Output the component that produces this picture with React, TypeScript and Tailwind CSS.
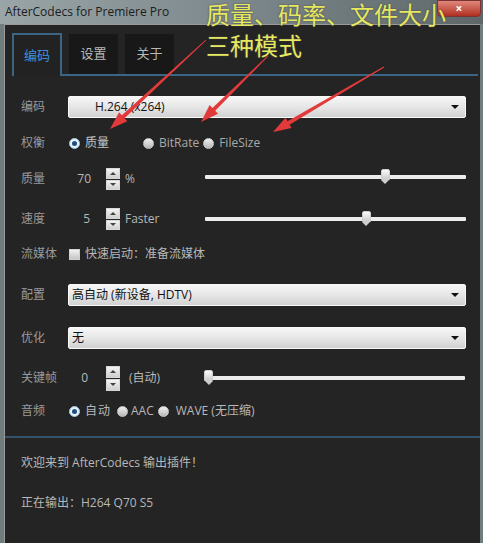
import type { ReactNode } from "react";

const CJK = "font-['Open_Sans','Noto_Sans_CJK_SC',sans-serif]";

/** Small row label on the left of the panel. */
const Label = ({ children }: { children: ReactNode }) => (
  <div className="w-[47px] shrink-0 text-[12px] text-[#9a9a9a]">{children}</div>
);

/** Light grey combo box with a black arrow. */
const Select = ({ value, pad = "pl-[26px]" }: { value: string; pad?: string }) => (
  <div
    className={`flex h-[22px] w-[398px] items-center justify-between rounded-[2px] border border-[#f8f8f8] bg-gradient-to-b from-[#f6f6f6] via-[#e6e6e6] to-[#d2d2d2] ${pad} pr-[6px] text-[12px] text-[#111]`}
  >
    <span>{value}</span>
    <span className="h-0 w-0 border-x-[4px] border-t-[4px] border-x-transparent border-t-[#111]" />
  </div>
);

const Radio = ({ on = false }: { on?: boolean }) => (
  <span
    className={`flex h-[11px] w-[11px] items-center justify-center rounded-full border ${
      on ? "border-[#9fc4e0] bg-[#e8f2fa]" : "border-[#c8c8c8] bg-gradient-to-b from-[#f0f0f0] to-[#b8b8b8]"
    }`}
  >
    {on && <span className="h-[5px] w-[5px] rounded-full bg-[#1d4f7c]" />}
  </span>
);

/** Up / down spin buttons. */
const Spinner = ({ tall = false }: { tall?: boolean }) => (
  <div className={`flex w-[14px] flex-col gap-[1px] ${tall ? "h-[25px]" : "h-[22px]"}`}>
    {[0, 1].map((i) => (
      <div
        key={i}
        className="flex flex-1 items-center justify-center border border-[#d8d8d8] bg-gradient-to-b from-[#f4f4f4] to-[#cfcfcf]"
      >
        <span
          className={`h-0 w-0 border-x-[3px] border-x-transparent ${
            i === 0 ? "border-b-[3px] border-b-[#444]" : "border-t-[3px] border-t-[#444]"
          }`}
        />
      </div>
    ))}
  </div>
);

/** Horizontal track with a pointed thumb; pos is px from track start. */
const Slider = ({ pos, width = 261 }: { pos: number; width?: number }) => (
  <div className="relative h-[16px]" style={{ width }}>
    <div className="absolute left-0 right-0 top-[6px] h-[4px] rounded-[1px] bg-[#ececec]" />
    <div className="absolute top-0 flex flex-col items-center" style={{ left: pos - 4 }}>
      <div className="h-[11px] w-[9px] rounded-t-[2px] border border-[#cfcfcf] bg-gradient-to-b from-[#fafafa] to-[#cdcdcd]" />
      <div className="h-0 w-0 border-x-[4px] border-t-[4px] border-x-transparent border-t-[#cdcdcd]" />
    </div>
  </div>
);

const Tab = ({ label, active = false }: { label: string; active?: boolean }) =>
  active ? (
    <div className="-mb-[2px] flex h-[43px] w-[50px] items-center justify-center border-x-2 border-t-2 border-[#3b6584] bg-[#222] text-[13px] text-[#3d8fe0]">
      {label}
    </div>
  ) : (
    <div className="flex h-[40px] w-[49px] items-center justify-center bg-[#181818] text-[13px] text-[#b8b8b8]">
      {label}
    </div>
  );

/** Tapered red annotation arrow drawn from (x1,y1) to the head at (x2,y2). */
const Arrow = ({ x1, y1, x2, y2 }: { x1: number; y1: number; x2: number; y2: number }) => {
  const dx = x2 - x1;
  const dy = y2 - y1;
  const len = Math.hypot(dx, dy);
  const ux = dx / len;
  const uy = dy / len;
  const nx = -uy;
  const ny = ux;
  const headLen = 18;
  const bx = x2 - ux * headLen;
  const by = y2 - uy * headLen;
  const pts = [
    [x1 + nx * 0.5, y1 + ny * 0.5],
    [bx + nx * 2, by + ny * 2],
    [bx + nx * 6, by + ny * 6],
    [x2, y2],
    [bx - nx * 6, by - ny * 6],
    [bx - nx * 2, by - ny * 2],
    [x1 - nx * 0.5, y1 - ny * 0.5],
  ]
    .map((p) => p.join(","))
    .join(" ");
  return <polygon points={pts} fill="#e23a3a" />;
};

export default function App() {
  return (
    <div className={`relative h-[543px] w-[483px] overflow-hidden bg-[#6f7d7d] ${CJK}`}>
      {/* title bar */}
      <div className="flex h-[24px] items-start bg-gradient-to-r from-[#9aa5a8] via-[#7b878a] to-[#5e686b] pl-[5px] pt-[3px]">
        <span className="text-[12px] text-[#1c1c1c] font-['Open_Sans',sans-serif]">
          AfterCodecs for Premiere Pro
        </span>
        <div className="ml-auto mr-[2px] -mt-[3px] flex h-[17px] w-[44px] items-center justify-center rounded-b-[4px] border border-[#7a3434] bg-gradient-to-b from-[#e0877a] to-[#b02c20] text-[12px] font-bold text-white">
          ×
        </div>
      </div>

      {/* window body */}
      <div className="ml-[4px] mr-[3px] h-[519px] border-l border-t border-[#9a9a9a] bg-[#242424]">
        <div className="pl-[7px] pt-[8px] pr-[2px]">
          <div className="flex items-end gap-[7px]">
            <Tab label="编码" active />
            <Tab label="设置" />
            <Tab label="关于" />
          </div>
          <div className="h-[2px] bg-[#3b6584]" />
        </div>

        <div className="pl-[16px] pt-[20px]">
          <div className="flex h-[22px] items-center">
            <Label>编码</Label>
            <Select value="H.264 (x264)" />
          </div>

          <div className="mt-[15px] flex h-[20px] items-center text-[12px] text-[#c4c4c4]">
            <Label>权衡</Label>
            <span className="ml-[1px]"><Radio on /></span>
            <span className="ml-[5px]">质量</span>
            <span className="ml-[34px]"><Radio /></span>
            <span className="ml-[5px] text-[#aaa]">BitRate</span>
            <span className="ml-[4px]"><Radio /></span>
            <span className="ml-[5px] text-[#aaa]">FileSize</span>
          </div>

          <div className="mt-[15px] flex h-[22px] items-center text-[12px] text-[#b8b8b8]">
            <Label>质量</Label>
            <span className="w-[23px] text-right">70</span>
            <span className="ml-[15px]"><Spinner /></span>
            <span className="ml-[5px]">%</span>
            <span className="ml-[70px] -mt-[4px]"><Slider pos={180} /></span>
          </div>

          <div className="mt-[18px] flex h-[22px] items-center text-[12px] text-[#b8b8b8]">
            <Label>速度</Label>
            <span className="w-[22px] text-right">5</span>
            <span className="ml-[16px]"><Spinner /></span>
            <span className="ml-[5px]">Faster</span>
            <span className="ml-[45px]"><Slider pos={161} /></span>
          </div>

          <div className="mt-[14px] flex h-[20px] items-center text-[12px] text-[#b8b8b8]">
            <Label>流媒体</Label>
            <span className="ml-[1px] h-[11px] w-[11px] border border-[#d0d0d0] bg-gradient-to-b from-[#f2f2f2] to-[#c4c4c4]" />
            <span className="ml-[5px]">快速启动：准备流媒体</span>
          </div>

          <div className="mt-[20px] flex h-[22px] items-center">
            <Label>配置</Label>
            <Select value="高自动 (新设备, HDTV)" pad="pl-[3px]" />
          </div>

          <div className="mt-[21px] flex h-[22px] items-center">
            <Label>优化</Label>
            <Select value="无" pad="pl-[3px]" />
          </div>

          <div className="mt-[16px] flex h-[26px] items-center text-[12px] text-[#b8b8b8]">
            <Label>关键帧</Label>
            <span className="w-[20px] text-right">0</span>
            <span className="ml-[18px]"><Spinner tall /></span>
            <span className="ml-[9px]">(自动)</span>
            <span className="ml-[44px]"><Slider pos={4} width={261} /></span>
          </div>

          <div className="mt-[10px] flex h-[20px] items-center text-[12px] text-[#b8b8b8]">
            <Label>音频</Label>
            <span className="ml-[1px]"><Radio on /></span>
            <span className="ml-[5px] tracking-[1px]">自动</span>
            <span className="ml-[6px]"><Radio /></span>
            <span className="ml-[3px]">AAC</span>
            <span className="ml-[4px]"><Radio /></span>
            <span className="ml-[7px]">WAVE (无压缩)</span>
          </div>
        </div>

        <div className="mt-[15px] h-[2px] bg-[#34536a]" />

        <div className="pl-[16px] pt-[16px] text-[12px] text-[#b8b8b8]">
          <div>欢迎来到 AfterCodecs 输出插件！</div>
          <div className="mt-[22px]">正在输出：H264 Q70 S5</div>
        </div>
      </div>

      {/* annotation overlay */}
      <div className="pointer-events-none absolute left-[206px] top-0 text-[24px] leading-[27px] text-[#e6e860] font-['Noto_Sans_CJK_SC',sans-serif] [text-shadow:0_0_2px_#444]">
        <div>质量、码率、文件大小</div>
        <div className="mt-[4px]">三种模式</div>
      </div>
      <svg className="pointer-events-none absolute left-0 top-0" width="483" height="543">
        <Arrow x1={206} y1={40} x2={110} y2={129} />
        <Arrow x1={268} y1={56} x2={201} y2={122} />
        <Arrow x1={384} y1={67} x2={273} y2={132} />
      </svg>
    </div>
  );
}
